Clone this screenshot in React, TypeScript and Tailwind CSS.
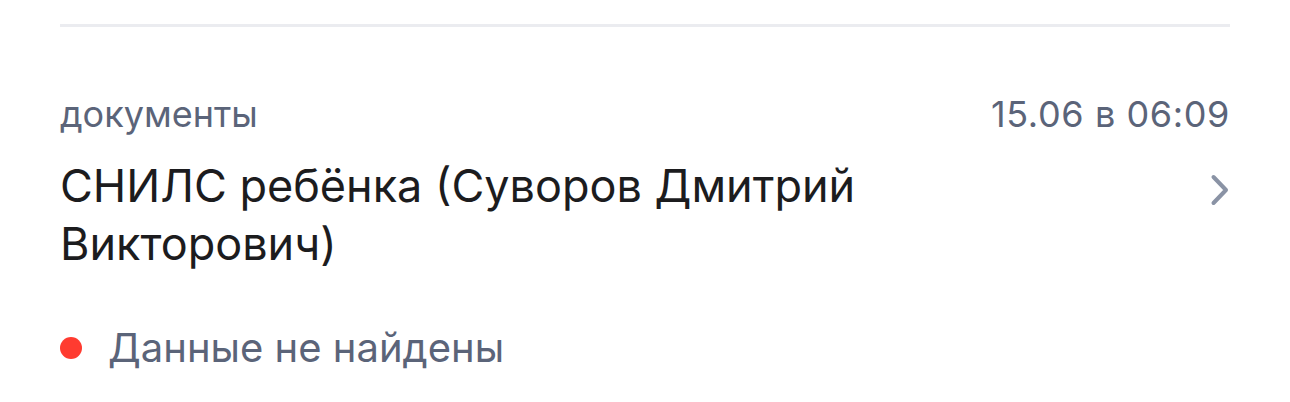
import { ReactElement } from 'react';

const App = (): ReactElement => {
  return (
    <div className="w-[1290px] h-[402px] bg-white px-[60px] pt-[24px] font-['Inter','Noto_Sans',sans-serif] overflow-hidden">
      <div className="h-[3px] bg-[#ebecf0]" />

      <div className="flex items-center justify-between mt-[64px] text-[36px] leading-[46px] text-[#5b6479]">
        <span>документы</span>
        <span className="tracking-[0.6px]">15.06 в 06:09</span>
      </div>

      <div className="flex items-start justify-between mt-[20px]">
        <p className="text-[45px] leading-[58px] text-[#1c1c1e] w-[830px]">
          СНИЛС ребёнка (Суворов Дмитрий Викторович)
        </p>
        <svg className="mt-[16px]" width="20" height="34" viewBox="0 0 20 34" fill="none">
          <path d="M3.5 4 L16 17 L3.5 30" stroke="#8a93a5" strokeWidth="4" strokeLinecap="round" strokeLinejoin="round" />
        </svg>
      </div>

      <div className="flex items-center gap-[26px] mt-[50px]">
        <span className="w-[22px] h-[22px] rounded-full bg-[#ff3b30]" />
        <span className="text-[40px] leading-[50px] text-[#5b6479]">Данные не найдены</span>
      </div>
    </div>
  );
};

export default App;
